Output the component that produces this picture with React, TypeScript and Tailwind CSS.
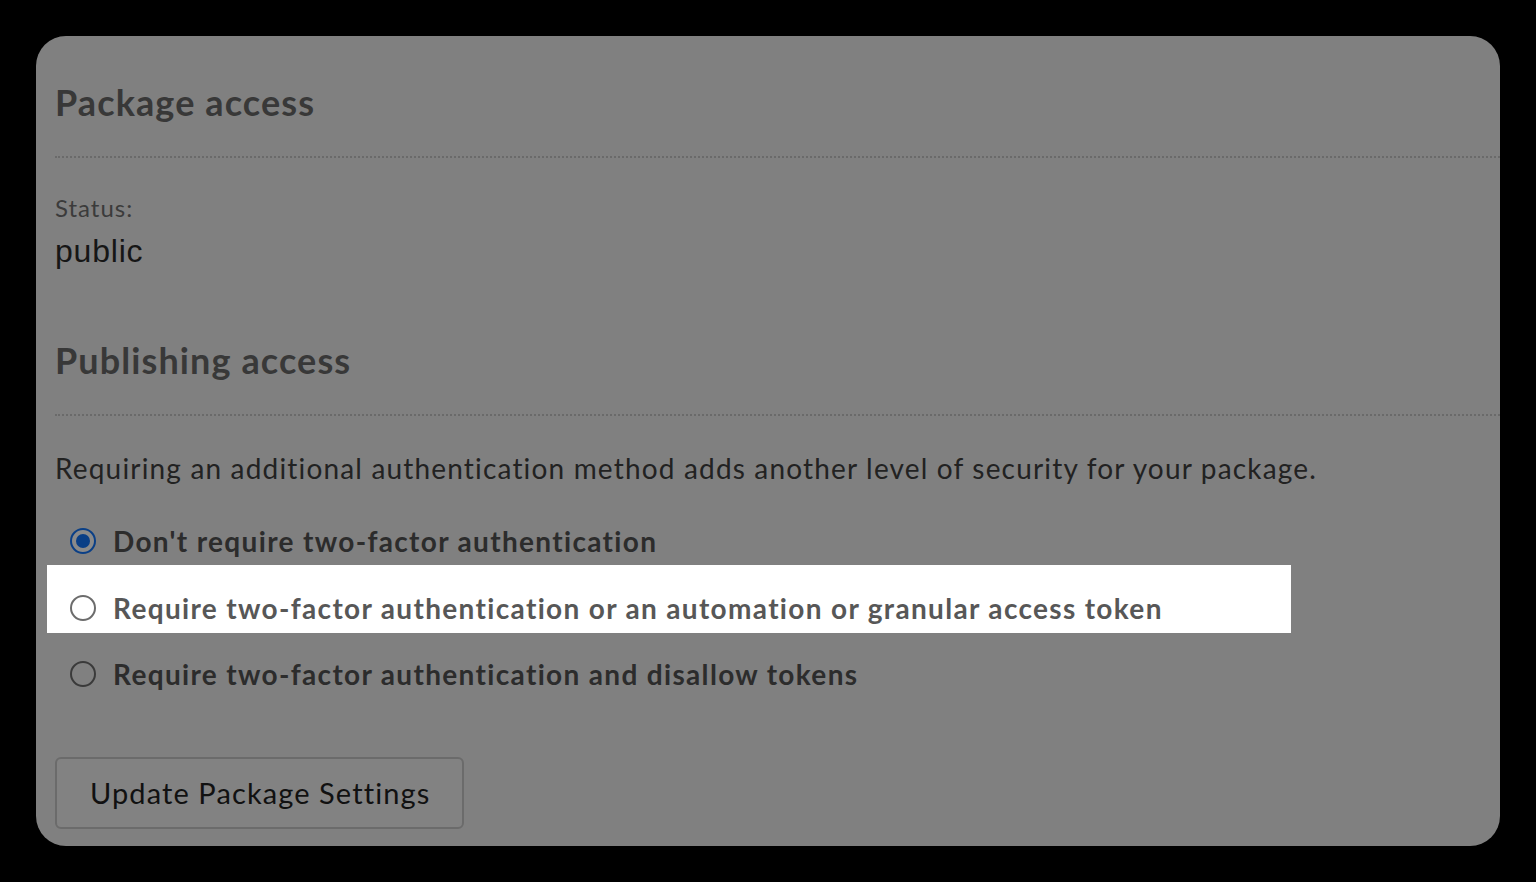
import { useState } from "react";

const options = [
  { id: "none", label: "Don't require two-factor authentication" },
  { id: "tfa-or-token", label: "Require two-factor authentication or an automation or granular access token" },
  { id: "tfa-strict", label: "Require two-factor authentication and disallow tokens" },
];

function Radio({ checked, light }: { checked: boolean; light?: boolean }) {
  if (checked) {
    return (
      <span className="flex h-[26px] w-[26px] shrink-0 items-center justify-center rounded-full border-[2px] border-[#0a3f86] bg-[#8a8a8a]">
        <span className="h-[14px] w-[14px] rounded-full bg-[#0a3f86]" />
      </span>
    );
  }
  return (
    <span
      className={
        light
          ? "h-[26px] w-[26px] shrink-0 rounded-full border-[2px] border-[#6c6c6c] bg-white"
          : "h-[26px] w-[26px] shrink-0 rounded-full border-[2px] border-[#3a3a3a] bg-[#808080]"
      }
    />
  );
}

export default function App() {
  const [selected] = useState("none");

  return (
    <div className="h-[882px] w-full overflow-hidden bg-black pt-[36px] pl-[36px] font-['Lato',sans-serif]">
      <div className="flex h-[810px] w-[1464px] flex-col rounded-[30px] bg-[#808080] pl-[19px]">
        {/* Package access */}
        <h2 className="mt-[42px] text-[36px] font-bold leading-[48px] tracking-[1.1px] text-[#383838]">Package access</h2>
        <div className="mt-[30px] border-t-2 border-dotted border-[#6a6a6a]" />

        <div className="mt-[36px] text-[24px] leading-[28px] tracking-[1px] text-[#3b3b3b]">Status:</div>
        <div className="mt-[12px] font-['Liberation_Sans',sans-serif] text-[32px] leading-[34px] tracking-[0.8px] text-[#161616]">public</div>

        {/* Publishing access */}
        <h2 className="mt-[68px] text-[36px] font-bold leading-[48px] tracking-[1.1px] text-[#383838]">Publishing access</h2>
        <div className="mt-[30px] border-t-2 border-dotted border-[#6a6a6a]" />

        <p className="mt-[34px] text-[28px] leading-[36px] tracking-[1.17px] text-[#222]">
          Requiring an additional authentication method adds another level of security for your package.
        </p>

        <div className="mt-[22px] flex flex-col">
          <label className="flex h-[66px] items-center gap-[17px] pl-[15px]">
            <Radio checked={selected === options[0].id} />
            <span className="text-[28px] font-bold tracking-[1.33px] text-[#2c2c2c]">{options[0].label}</span>
          </label>

          {/* highlighted row */}
          <label className="-ml-[8px] -mt-[9px] flex h-[68px] w-[1244px] items-center gap-[17px] bg-white pl-[23px] pt-[18px]">
            <Radio checked={selected === options[1].id} light />
            <span className="text-[28px] font-bold tracking-[1.33px] text-[#575757]">{options[1].label}</span>
          </label>

          <label className="mt-[8px] flex h-[66px] items-center gap-[17px] pl-[15px]">
            <Radio checked={selected === options[2].id} />
            <span className="text-[28px] font-bold tracking-[1.33px] text-[#2c2c2c]">{options[2].label}</span>
          </label>
        </div>

        <button className="mt-[50px] flex h-[72px] w-[409px] items-center rounded-[6px] border-2 border-[#6b6b6b] bg-[#828282] pl-[33px] text-left text-[29px] tracking-[1.1px] text-[#111]">
          Update Package Settings
        </button>
      </div>
    </div>
  );
}
